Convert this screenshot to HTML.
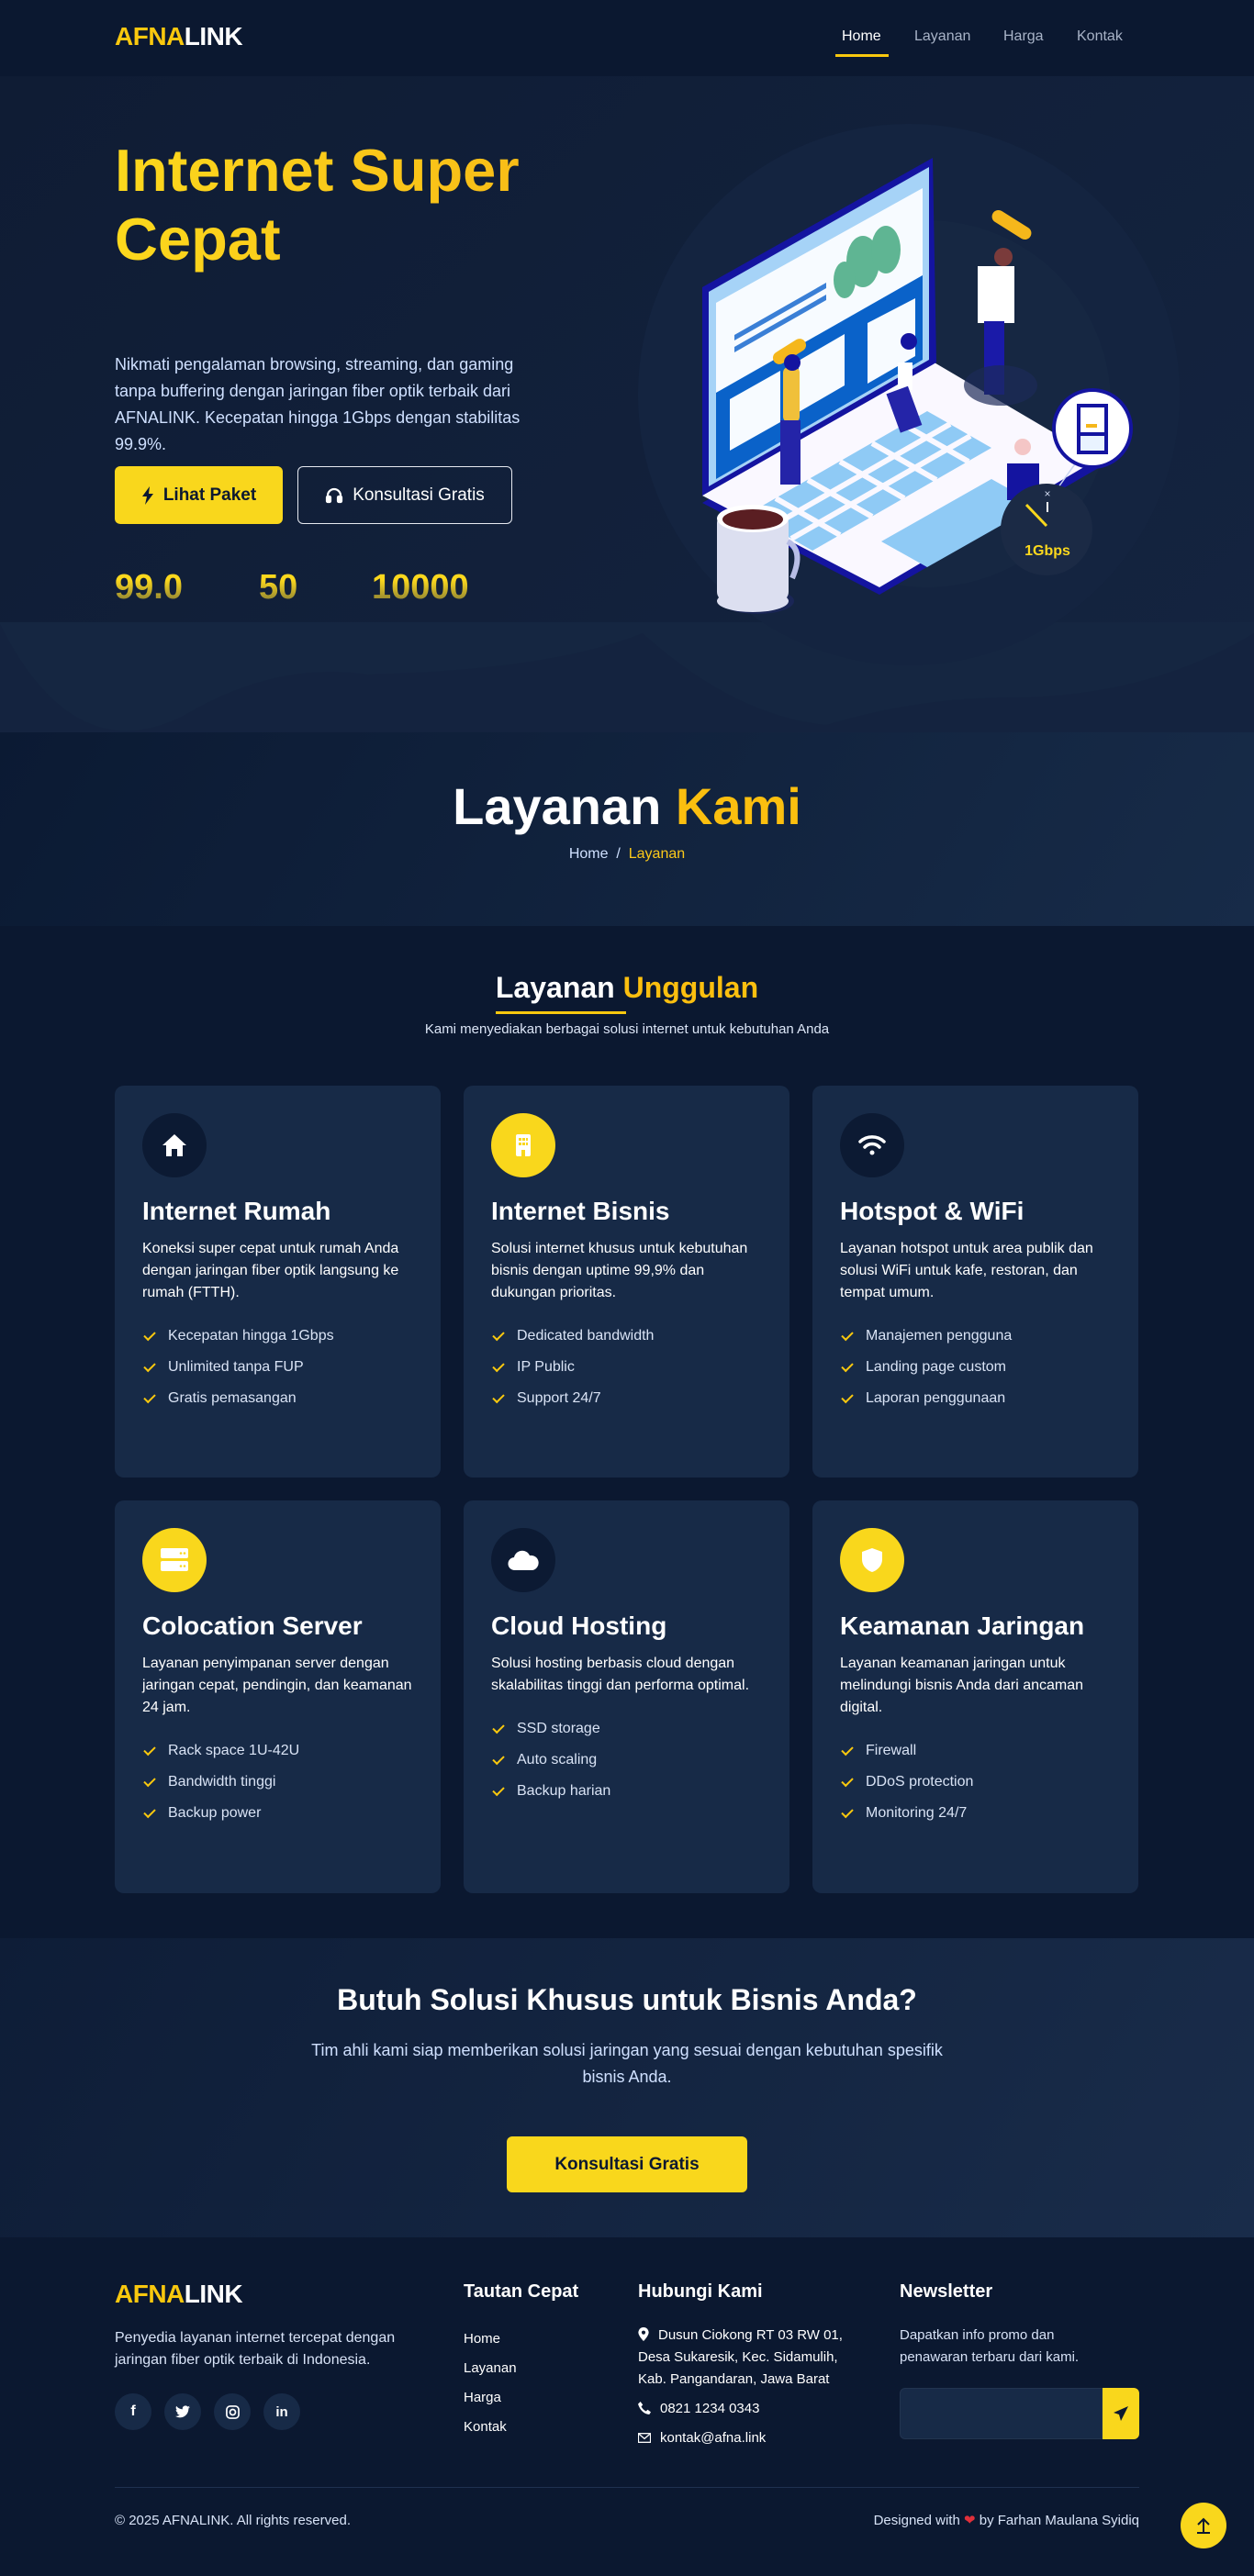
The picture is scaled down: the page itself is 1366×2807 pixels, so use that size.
<!DOCTYPE html>
<html><head><meta charset="utf-8">
<style>
*{margin:0;padding:0;box-sizing:border-box}
body{width:1366px;height:2807px;background:#0b1830;font-family:"Liberation Sans",Arial,sans-serif;color:#fff;position:relative;overflow:hidden}
.abs{position:absolute}
nav{position:absolute;left:0;top:0;width:1366px;height:83px;background:#0b1830;z-index:5}
.logo{font-weight:bold;font-size:28px;letter-spacing:-0.5px}
.logo .y{color:#f9c80e}
.nl{position:absolute;top:31px;font-size:16px;color:#a8b3c7}
.hero{position:absolute;left:0;top:83px;width:1366px;height:715px;background:linear-gradient(135deg,#0f1c34,#142440);overflow:hidden}
h1{position:absolute;left:125px;top:148px;font-size:65px;line-height:75px;color:#fbc91a;font-weight:bold;background:linear-gradient(90deg,#fcd81d,#f8bd17);-webkit-background-clip:text;color:transparent}
.hp{position:absolute;left:125px;top:383px;width:485px;font-size:18px;line-height:29px;color:#cfe0ff}
.btn1{position:absolute;left:125px;top:508px;width:183px;height:63px;background:#f9d71c;border-radius:6px;color:#0b1830;font-weight:bold;font-size:19px;display:flex;align-items:center;justify-content:center;gap:10px}
.btn2{position:absolute;left:324px;top:508px;width:234px;height:63px;border:1.5px solid #e6e9f0;border-radius:6px;color:#fff;font-size:19px;display:flex;align-items:center;justify-content:center;gap:10px}
.stat{position:absolute;top:619px;font-size:38px;font-weight:bold;background:linear-gradient(180deg,#fcd81d 30%,#6e6a3a 100%);-webkit-background-clip:text;color:transparent}
.ph{position:absolute;left:0;top:798px;width:1366px;height:211px;background:linear-gradient(120deg,#0b1a33,#172b48)}
.sec-title{position:absolute;left:0;width:1366px;text-align:center;font-weight:bold}
.card{position:absolute;width:355px;background:#172a47;border-radius:10px;padding:30px}
.ic{width:70px;height:70px;border-radius:50%;display:flex;align-items:center;justify-content:center}
.ic.d{background:#0c1a33}.ic.yl{background:#f9d71c}
.card h3{font-size:28px;margin-top:20px;line-height:34px}
.card p{font-size:16px;line-height:24px;color:#fff;margin-top:12px}
.card ul{list-style:none;margin-top:18px}
.card li{font-size:16px;line-height:34px;color:#d9e3f5;display:flex;align-items:center}
.card li:before{content:"";width:10px;height:5px;border-left:2px solid #f9c80e;border-bottom:2px solid #f9c80e;transform:rotate(-45deg);margin:0 14px 4px 2px}
.cta{position:absolute;left:0;top:2112px;width:1366px;height:326px;background:linear-gradient(120deg,#0e1d37,#192c4a)}
.fh{position:absolute;top:2486px;font-size:20px;font-weight:bold}
.ft{position:absolute;font-size:16px;color:#d7e2f6;line-height:24px}
.soc{position:absolute;top:2608px;width:40px;height:40px;border-radius:50%;background:#172a47;display:flex;align-items:center;justify-content:center}
</style></head><body>
<nav>
 <div class="abs logo" style="left:125px;top:24px"><span class="y">AFNA</span>LINK</div>
 <div class="nl" style="left:917px;color:#fff">Home</div>
 <div class="abs" style="left:910px;top:59px;width:58px;height:3px;background:#f9c80e"></div>
 <div class="nl" style="left:996px">Layanan</div>
 <div class="nl" style="left:1093px">Harga</div>
 <div class="nl" style="left:1173px">Kontak</div>
</nav>
<div class="hero">
 <svg class="abs" style="left:0;top:0" width="1366" height="715" viewBox="0 83 1366 715">
  <rect x="0" y="678" width="1366" height="120" fill="#152641"/>
  <path d="M0 680 Q80 840 200 780 Q300 720 400 735 Q600 730 700 690 Q800 780 900 790 Q1000 760 1100 760 Q1250 760 1366 690 L1366 798 L0 798Z" fill="#14233e" opacity="0.8"/>
  <circle cx="990" cy="430" r="295" fill="#142440"/>
  <circle cx="1010" cy="440" r="200" fill="#182a45" opacity="0.6"/>
  <polygon points="765,548 1016,402 1200,508 958,648" fill="#1414a0"/>
  <polygon points="765,540 1016,394 1196,500 958,640" fill="#faf8ff"/>
  <polygon points="815,560 1010,448 1080,488 885,600" fill="#8fcaf5"/>
  <g stroke="#faf8ff" stroke-width="6">
   <line x1="840" y1="574" x2="1035" y2="462"/><line x1="862" y1="587" x2="1057" y2="475"/>
   <line x1="845" y1="543" x2="915" y2="583"/><line x1="880" y1="523" x2="950" y2="563"/><line x1="915" y1="503" x2="985" y2="543"/><line x1="950" y1="483" x2="1020" y2="523"/><line x1="985" y1="463" x2="1055" y2="503"/>
  </g>
  <polygon points="960,590 1080,522 1130,550 1010,618" fill="#8fcaf5"/>
  <polygon points="765,313 1016,172 1020,395 765,540" fill="#1414a0"/>
  <polygon points="772,318 1012,182 1012,392 772,530" fill="#a6d3f7"/>
  <polygon points="780,330 1005,205 1005,300 780,428" fill="#f7fbff"/>
  <polygon points="780,428 1005,300 1005,392 780,522" fill="#0a62c9"/>
  <polygon points="800,365 900,308 900,314 800,371" fill="#3a7fd6"/>
  <polygon points="800,378 900,321 900,327 800,384" fill="#3a7fd6"/>
  <polygon points="795,435 850,404 850,460 795,491" fill="#f7fbff"/>
  <polygon points="870,393 920,364 920,420 870,449" fill="#f7fbff"/>
  <polygon points="945,352 997,325 997,388 945,418" fill="#f7fbff"/>
  <ellipse cx="940" cy="285" rx="18" ry="28" fill="#5fb593"/>
  <ellipse cx="965" cy="272" rx="16" ry="26" fill="#5fb593"/>
  <ellipse cx="920" cy="305" rx="12" ry="20" fill="#5fb593"/>
  <rect x="840" y="376" width="40" height="14" rx="7" fill="#f5b71b" transform="rotate(-32 860 383)"/>
  <rect x="853" y="400" width="18" height="60" rx="6" fill="#f0c03a"/>
  <rect x="850" y="458" width="22" height="70" fill="#2424a8"/>
  <circle cx="863" cy="395" r="9" fill="#1414a0"/>
  <rect x="978" y="395" width="16" height="30" fill="#fff"/>
  <rect x="970" y="425" width="25" height="45" fill="#2424a8" transform="rotate(-20 980 440)"/>
  <circle cx="990" cy="372" r="9" fill="#1414a0"/>
  <rect x="1078" y="238" width="48" height="14" rx="7" fill="#f5b71b" transform="rotate(32 1102 245)"/>
  <rect x="1065" y="290" width="40" height="62" fill="#fff"/>
  <rect x="1072" y="350" width="22" height="80" fill="#1a1aa8"/>
  <circle cx="1093" cy="280" r="10" fill="#7a3b3b"/>
  <ellipse cx="1090" cy="420" rx="40" ry="22" fill="#1c2b58" opacity="0.7"/>
  <rect x="1097" y="505" width="35" height="40" fill="#1414a0"/>
  <circle cx="1114" cy="487" r="9" fill="#f4c6c6"/>
  <ellipse cx="825" cy="655" rx="40" ry="14" fill="#1a2656"/>
  <rect x="781" y="560" width="78" height="95" rx="10" fill="#dcdff0"/>
  <ellipse cx="820" cy="655" rx="39" ry="12" fill="#dcdff0"/>
  <ellipse cx="820" cy="565" rx="39" ry="15" fill="#fff"/>
  <ellipse cx="820" cy="566" rx="33" ry="11" fill="#5a1e22"/>
  <path d="M858 590 q18 10 5 40" stroke="#b7bde6" stroke-width="6" fill="none"/>
  <line x1="1150" y1="535" x2="1175" y2="500" stroke="#c8d4f0" stroke-width="1.5"/>
  <circle cx="1190" cy="467" r="42" fill="#fff" stroke="#1414a0" stroke-width="4"/>
  <rect x="1173" y="440" width="34" height="55" fill="#1414a0"/>
  <rect x="1177" y="444" width="26" height="27" fill="#fff"/>
  <rect x="1177" y="475" width="26" height="16" fill="#e9f3ff"/>
  <rect x="1183" y="462" width="12" height="4" fill="#f5b71b"/>
  <circle cx="1140" cy="577" r="50" fill="#1b2a45"/>
  <line x1="1118" y1="550" x2="1140" y2="573" stroke="#f9d71c" stroke-width="3"/>
  <line x1="1141" y1="547" x2="1141" y2="558" stroke="#fff" stroke-width="2"/>
  <text x="1141" y="542" fill="#cfd8ee" font-size="12" text-anchor="middle" font-family="Liberation Sans">×</text>
  <text x="1141" y="605" fill="#fcd81d" font-size="16" font-weight="bold" text-anchor="middle" font-family="Liberation Sans">1Gbps</text>
 </svg>
</div>
<h1>Internet Super<br>Cepat</h1>
<div class="hp">Nikmati pengalaman browsing, streaming, dan gaming<br>tanpa buffering dengan jaringan fiber optik terbaik dari<br>AFNALINK. Kecepatan hingga 1Gbps dengan stabilitas<br>99.9%.</div>
<div class="btn1"><svg width="14" height="20" viewBox="0 0 14 20"><path d="M9 0 L1 11 H6 L4 20 L13 8 H8 Z" fill="#0b1830"/></svg>Lihat Paket</div>
<div class="btn2"><svg width="20" height="20" viewBox="0 0 20 20" fill="none" stroke="#fff" stroke-width="2.2"><path d="M3 12 V10 a7 7 0 0 1 14 0 V12"/><rect x="2" y="11" width="4" height="6" rx="1" fill="#fff"/><rect x="14" y="11" width="4" height="6" rx="1" fill="#fff"/></svg>Konsultasi Gratis</div>
<div class="stat" style="left:125px">99.0</div>
<div class="stat" style="left:282px">50</div>
<div class="stat" style="left:405px">10000</div>

<div class="ph"></div>
<div class="sec-title" style="top:846px;font-size:56px;line-height:66px">Layanan <span style="color:#fbbf0f">Kami</span></div>
<div class="sec-title" style="top:922px;font-size:16px;font-weight:normal;color:#cfe0ff">Home &nbsp;/&nbsp; <span style="color:#fbc91a">Layanan</span></div>

<div class="sec-title" style="top:1057px;font-size:32px;line-height:38px">Layanan <span style="color:#fbbf0f">Unggulan</span></div>
<div class="abs" style="left:540px;top:1102px;width:142px;height:3px;background:#f9c80e"></div>
<div class="sec-title" style="top:1113px;font-size:15px;font-weight:normal;color:#dce6f7">Kami menyediakan berbagai solusi internet untuk kebutuhan Anda</div>

<div class="card" style="left:125px;top:1183px;height:427px">
 <div class="ic d"><svg width="28" height="26" viewBox="0 0 28 26"><path d="M14 1 L27 13 H23 V25 H17 V17 H11 V25 H5 V13 H1 Z" fill="#fff"/></svg></div>
 <h3>Internet Rumah</h3>
 <p>Koneksi super cepat untuk rumah Anda dengan jaringan fiber optik langsung ke rumah (FTTH).</p>
 <ul><li>Kecepatan hingga 1Gbps</li><li>Unlimited tanpa FUP</li><li>Gratis pemasangan</li></ul>
</div>
<div class="card" style="left:505px;top:1183px;height:427px">
 <div class="ic yl"><svg width="18" height="26" viewBox="0 0 18 26"><rect x="1" y="1" width="16" height="24" rx="2" fill="#fff"/><g fill="#f9d71c"><rect x="4" y="5" width="3" height="3"/><rect x="8" y="5" width="3" height="3"/><rect x="12" y="5" width="2" height="3"/><rect x="4" y="10" width="3" height="3"/><rect x="8" y="10" width="3" height="3"/><rect x="12" y="10" width="2" height="3"/><rect x="7" y="18" width="4" height="7"/></g></svg></div>
 <h3>Internet Bisnis</h3>
 <p>Solusi internet khusus untuk kebutuhan bisnis dengan uptime 99,9% dan dukungan prioritas.</p>
 <ul><li>Dedicated bandwidth</li><li>IP Public</li><li>Support 24/7</li></ul>
</div>
<div class="card" style="left:885px;top:1183px;height:427px">
 <div class="ic d"><svg width="32" height="26" viewBox="0 0 32 26" fill="none" stroke="#fff" stroke-width="3.5" stroke-linecap="round"><path d="M3 9 a19 19 0 0 1 26 0"/><path d="M8 15 a11 11 0 0 1 16 0"/><circle cx="16" cy="21" r="2.5" fill="#fff" stroke="none"/></svg></div>
 <h3>Hotspot &amp; WiFi</h3>
 <p>Layanan hotspot untuk area publik dan solusi WiFi untuk kafe, restoran, dan tempat umum.</p>
 <ul><li>Manajemen pengguna</li><li>Landing page custom</li><li>Laporan penggunaan</li></ul>
</div>
<div class="card" style="left:125px;top:1635px;height:428px">
 <div class="ic yl"><svg width="30" height="28" viewBox="0 0 30 28"><rect x="0" y="1" width="30" height="11" rx="2" fill="#fff"/><rect x="0" y="15" width="30" height="11" rx="2" fill="#fff"/><g fill="#f9d71c"><circle cx="22" cy="6.5" r="1.3"/><circle cx="26" cy="6.5" r="1.3"/><circle cx="22" cy="20.5" r="1.3"/><circle cx="26" cy="20.5" r="1.3"/></g></svg></div>
 <h3>Colocation Server</h3>
 <p>Layanan penyimpanan server dengan jaringan cepat, pendingin, dan keamanan 24 jam.</p>
 <ul><li>Rack space 1U-42U</li><li>Bandwidth tinggi</li><li>Backup power</li></ul>
</div>
<div class="card" style="left:505px;top:1635px;height:428px">
 <div class="ic d"><svg width="34" height="24" viewBox="0 0 34 24"><path d="M8 23 a7 7 0 0 1 -1 -14 a9 9 0 0 1 17 -2 a7.5 7.5 0 0 1 3 16 Z" fill="#fff"/></svg></div>
 <h3>Cloud Hosting</h3>
 <p>Solusi hosting berbasis cloud dengan skalabilitas tinggi dan performa optimal.</p>
 <ul><li>SSD storage</li><li>Auto scaling</li><li>Backup harian</li></ul>
</div>
<div class="card" style="left:885px;top:1635px;height:428px">
 <div class="ic yl"><svg width="24" height="28" viewBox="0 0 24 28"><path d="M12 1 L23 5 V13 C23 20 18 25 12 27 C6 25 1 20 1 13 V5 Z" fill="#fff"/></svg></div>
 <h3>Keamanan Jaringan</h3>
 <p>Layanan keamanan jaringan untuk melindungi bisnis Anda dari ancaman digital.</p>
 <ul><li>Firewall</li><li>DDoS protection</li><li>Monitoring 24/7</li></ul>
</div>

<div class="cta"></div>
<div class="sec-title" style="top:2160px;font-size:32px;line-height:38px">Butuh Solusi Khusus untuk Bisnis Anda?</div>
<div class="abs" style="left:300px;top:2220px;width:766px;text-align:center;font-size:18px;line-height:29px;color:#cfe0ff">Tim ahli kami siap memberikan solusi jaringan yang sesuai dengan kebutuhan spesifik<br>bisnis Anda.</div>
<div class="abs" style="left:552px;top:2328px;width:262px;height:61px;background:#f9d71c;border-radius:6px;color:#0b1830;font-weight:bold;font-size:19px;display:flex;align-items:center;justify-content:center">Konsultasi Gratis</div>

<div class="abs logo" style="left:125px;top:2484px"><span class="y">AFNA</span>LINK</div>
<div class="ft" style="left:125px;top:2536px;width:330px">Penyedia layanan internet tercepat dengan<br>jaringan fiber optik terbaik di Indonesia.</div>
<div class="soc" style="left:125px"><span style="font-weight:bold;font-size:16px">f</span></div>
<div class="soc" style="left:179px"><svg width="16" height="14" viewBox="0 0 24 20"><path d="M24 2.4a10 10 0 0 1-2.8.8 4.9 4.9 0 0 0 2.1-2.7 9.8 9.8 0 0 1-3.1 1.2A4.9 4.9 0 0 0 11.8 6 14 14 0 0 1 1.7.9a4.9 4.9 0 0 0 1.5 6.6A4.9 4.9 0 0 1 1 6.9a4.9 4.9 0 0 0 3.9 4.8 4.9 4.9 0 0 1-2.2.1 4.9 4.9 0 0 0 4.6 3.4A9.9 9.9 0 0 1 0 17.3 14 14 0 0 0 7.5 19.5c9 0 14-7.5 14-14v-.6A10 10 0 0 0 24 2.4z" fill="#fff"/></svg></div>
<div class="soc" style="left:233px"><svg width="15" height="15" viewBox="0 0 16 16" fill="none" stroke="#fff" stroke-width="1.8"><rect x="1" y="1" width="14" height="14" rx="4"/><circle cx="8" cy="8" r="3.2"/></svg></div>
<div class="soc" style="left:287px"><span style="font-weight:bold;font-size:15px">in</span></div>

<div class="fh" style="left:505px">Tautan Cepat</div>
<div class="ft" style="left:505px;top:2533px;line-height:32px;color:#fff;font-size:15px">Home<br>Layanan<br>Harga<br>Kontak</div>

<div class="fh" style="left:695px">Hubungi Kami</div>
<div class="ft" style="left:695px;top:2533px;width:270px;color:#fff;font-size:15px"><svg width="12" height="15" viewBox="0 0 12 16" style="vertical-align:-2px;margin-right:10px"><path d="M6 0a6 6 0 0 1 6 6c0 4-6 10-6 10S0 10 0 6a6 6 0 0 1 6-6z" fill="#fff"/><circle cx="6" cy="6" r="2.2" fill="#0b1830"/></svg>Dusun Ciokong RT 03 RW 01,<br>Desa Sukaresik, Kec. Sidamulih,<br>Kab. Pangandaran, Jawa Barat</div>
<div class="ft" style="left:695px;top:2613px;color:#fff;font-size:15px"><svg width="14" height="14" viewBox="0 0 16 16" style="vertical-align:-2px;margin-right:10px"><path d="M3 0 L6 4 L4 6 Q6 10 10 12 L12 10 L16 13 L14 16 Q4 15 0 3 Z" fill="#fff"/></svg>0821 1234 0343</div>
<div class="ft" style="left:695px;top:2645px;color:#fff;font-size:15px"><svg width="14" height="11" viewBox="0 0 16 12" style="vertical-align:-1px;margin-right:10px"><rect x="0.5" y="0.5" width="15" height="11" fill="none" stroke="#fff" stroke-width="1.5"/><path d="M1 1 L8 7 L15 1" stroke="#fff" stroke-width="1.5" fill="none"/></svg>kontak@afna.link</div>

<div class="fh" style="left:980px">Newsletter</div>
<div class="ft" style="left:980px;top:2533px;width:270px;font-size:15px">Dapatkan info promo dan<br>penawaran terbaru dari kami.</div>
<div class="abs" style="left:980px;top:2602px;width:221px;height:56px;background:#172a47;border:1px solid #22344f;border-radius:6px 0 0 6px"></div>
<div class="abs" style="left:1201px;top:2602px;width:40px;height:56px;background:#f9d71c;border-radius:0 6px 6px 0;display:flex;align-items:center;justify-content:center"><svg width="16" height="16" viewBox="0 0 16 16"><path d="M16 0 L0 7 L6 9 L8 16 Z" fill="#0b1830"/></svg></div>

<div class="abs" style="left:125px;top:2710px;width:1116px;height:1px;background:#1f3050"></div>
<div class="ft" style="left:125px;top:2735px;font-size:15px">© 2025 AFNALINK. All rights reserved.</div>
<div class="ft" style="left:930px;top:2735px;width:311px;text-align:right;font-size:15px">Designed with <span style="color:#e0303b">❤</span> by Farhan Maulana Syidiq</div>
<div class="abs" style="left:1286px;top:2727px;width:50px;height:50px;border-radius:50%;background:#f9d71c;display:flex;align-items:center;justify-content:center"><svg width="18" height="20" viewBox="0 0 18 20" fill="none" stroke="#0b1830" stroke-width="2"><path d="M9 17 V3 M3 9 L9 3 L15 9 M2 18 H16"/></svg></div>
</body></html>
